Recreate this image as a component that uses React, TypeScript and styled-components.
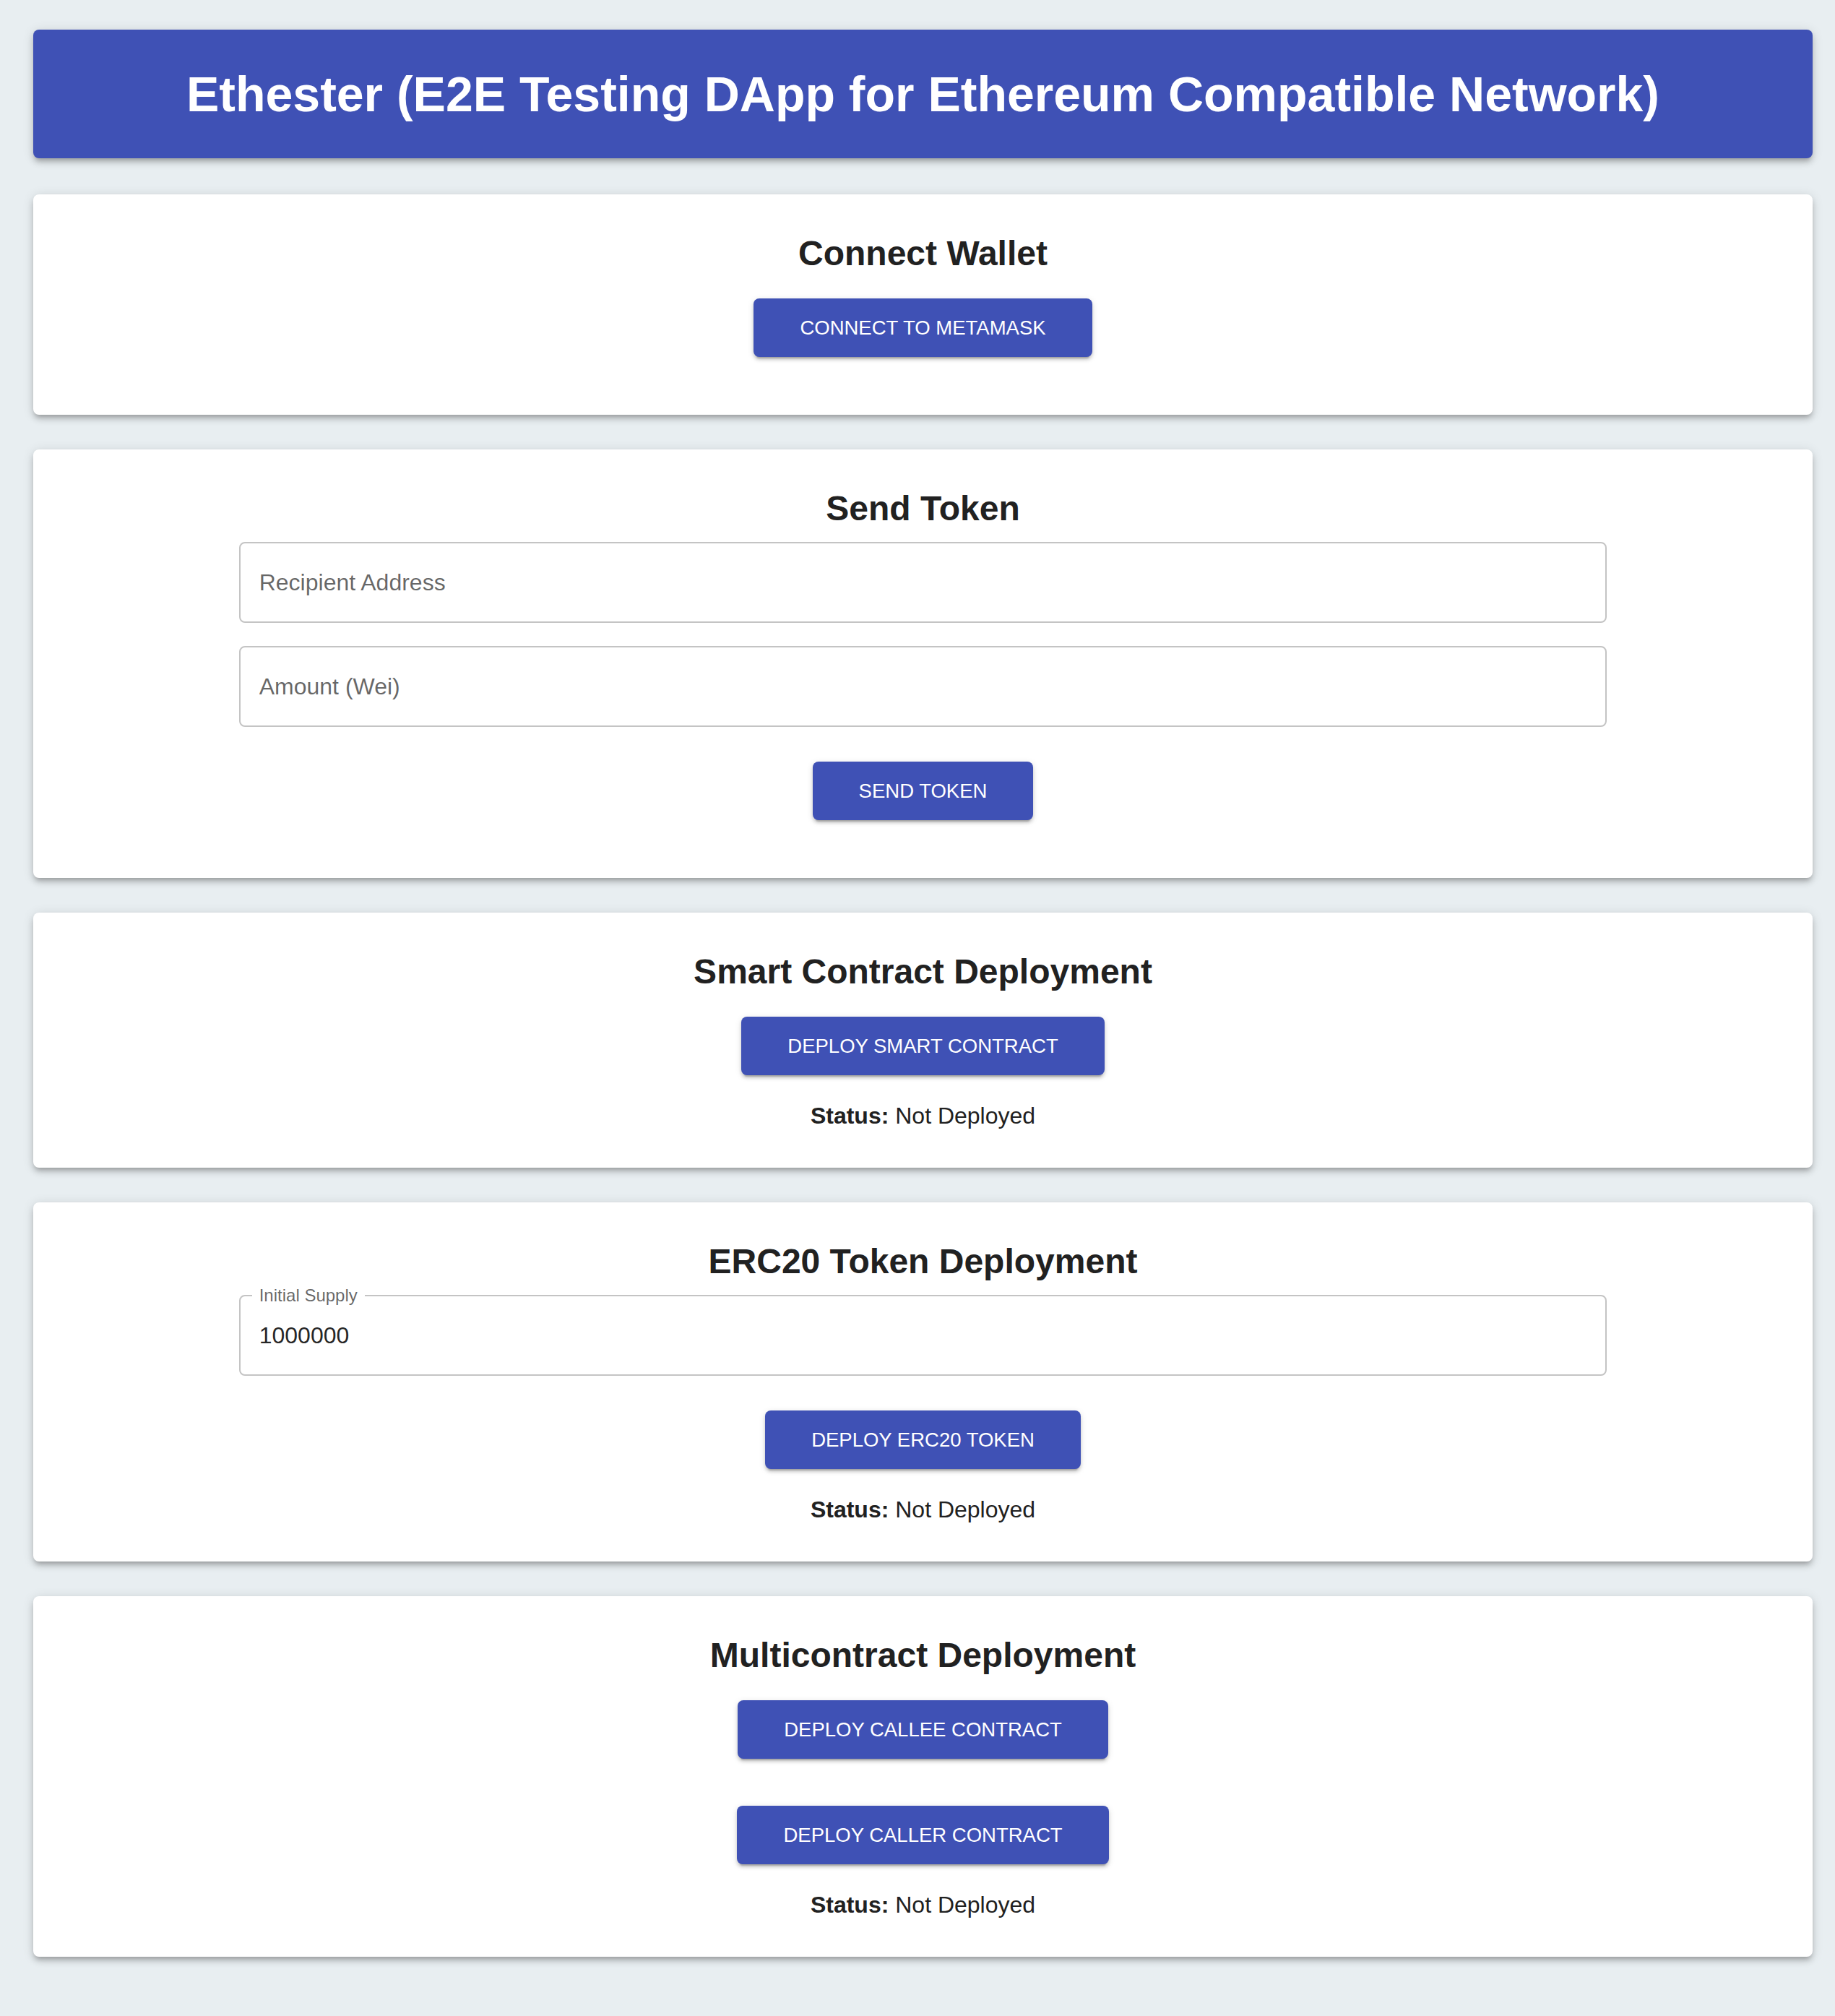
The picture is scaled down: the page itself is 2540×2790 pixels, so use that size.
import React from 'react';
import styled, { createGlobalStyle } from 'styled-components';

const GlobalStyle = createGlobalStyle`
  html, body {
    margin: 0;
    padding: 0;
    background-color: #e8eef1;
  }
  body {
    font-family: 'Liberation Sans', Arial, Helvetica, sans-serif;
    color: #212121;
  }
  * {
    box-sizing: border-box;
  }
`;

type FieldProps = {
  placeholder?: string;
  label?: string;
  value?: string;
};

const Field = ({ placeholder, label, value }: FieldProps) => (
  <FieldWrapper>
    {label && <FloatingLabel>{label}</FloatingLabel>}
    <TextInput placeholder={placeholder} defaultValue={value} />
  </FieldWrapper>
);

const Status = () => (
  <StatusText>
    <strong>Status:</strong> Not Deployed
  </StatusText>
);

const App = () => {
  return (
    <>
      <GlobalStyle />
      <Page>
        <HeaderBar>
          <HeaderTitle>Ethester (E2E Testing DApp for Ethereum Compatible Network)</HeaderTitle>
        </HeaderBar>

        <Card>
          <CardTitle>Connect Wallet</CardTitle>
          <ActionButton>Connect to MetaMask</ActionButton>
        </Card>

        <Card>
          <CardTitle>Send Token</CardTitle>
          <Field placeholder="Recipient Address" />
          <Field placeholder="Amount (Wei)" />
          <ActionButton>Send Token</ActionButton>
        </Card>

        <Card>
          <CardTitle>Smart Contract Deployment</CardTitle>
          <ActionButton>Deploy Smart Contract</ActionButton>
          <Status />
        </Card>

        <Card>
          <CardTitle>ERC20 Token Deployment</CardTitle>
          <Field label="Initial Supply" value="1000000" />
          <ActionButton>Deploy ERC20 Token</ActionButton>
          <Status />
        </Card>

        <Card>
          <CardTitle>Multicontract Deployment</CardTitle>
          <ActionButton>Deploy Callee Contract</ActionButton>
          <ActionButton $spaced>Deploy Caller Contract</ActionButton>
          <Status />
        </Card>
      </Page>
    </>
  );
};

export default App;

const Page = styled.div`
  display: flex;
  flex-direction: column;
  gap: 48px;
  padding: 41px 31px 82px 46px;
`;

const HeaderBar = styled.header`
  padding: 48px;
  margin-bottom: 2px;
  border-radius: 8px;
  background-color: #3f51b5;
  box-shadow: 0px 6px 6px -4px rgba(0, 0, 0, 0.2), 0px 6px 8px 0px rgba(0, 0, 0, 0.14),
    0px 2px 16px 0px rgba(0, 0, 0, 0.12);
`;

const HeaderTitle = styled.h1`
  margin: 0;
  font-size: 68px;
  line-height: 82px;
  font-weight: 700;
  color: #ffffff;
  text-align: center;
`;

const Card = styled.section`
  display: flex;
  flex-direction: column;
  align-items: center;
  padding: 50px 48px 48px;
  border-radius: 8px;
  background-color: #ffffff;
  box-shadow: 0px 6px 6px -4px rgba(0, 0, 0, 0.2), 0px 6px 8px 0px rgba(0, 0, 0, 0.14),
    0px 2px 16px 0px rgba(0, 0, 0, 0.12);
`;

const CardTitle = styled.h2`
  margin: 0 0 14px;
  font-size: 48px;
  line-height: 64px;
  font-weight: 700;
  color: #212121;
`;

const FieldWrapper = styled.div`
  position: relative;
  width: 80%;
  margin-bottom: 32px;
`;

const FloatingLabel = styled.span`
  position: absolute;
  top: -13px;
  left: 18px;
  padding: 0 10px;
  background-color: #ffffff;
  font-size: 24px;
  line-height: 28px;
  color: rgba(0, 0, 0, 0.6);
`;

const TextInput = styled.input`
  display: block;
  width: 100%;
  height: 112px;
  padding: 0 26px;
  border: 2px solid #c4c4c4;
  border-radius: 8px;
  background: #ffffff;
  font-family: inherit;
  font-size: 32px;
  color: rgba(0, 0, 0, 0.87);
  outline: none;

  &::placeholder {
    color: rgba(0, 0, 0, 0.6);
    opacity: 1;
  }
`;

const ActionButton = styled.button<{ $spaced?: boolean }>`
  height: 81px;
  margin: ${({ $spaced }) => ($spaced ? '33px' : '16px')} 0 32px;
  padding: 0 64px;
  border: none;
  border-radius: 8px;
  background-color: #3f51b5;
  color: #ffffff;
  font-family: inherit;
  font-size: 27.5px;
  font-weight: 500;
  text-transform: uppercase;
  cursor: pointer;
  box-shadow: 0px 6px 2px -4px rgba(0, 0, 0, 0.2), 0px 4px 4px 0px rgba(0, 0, 0, 0.14),
    0px 2px 10px 0px rgba(0, 0, 0, 0.12);
`;

const StatusText = styled.p`
  margin: 0;
  font-size: 32px;
  line-height: 48px;
  color: #212121;

  strong {
    font-weight: 700;
  }
`;
